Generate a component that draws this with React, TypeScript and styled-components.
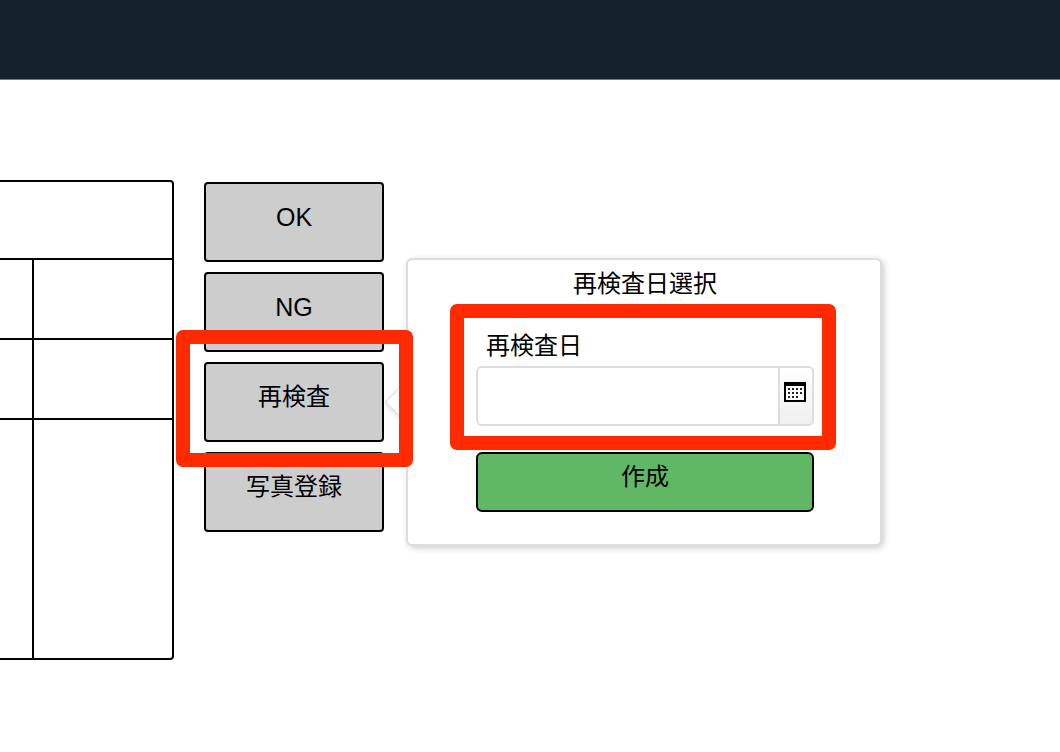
import React from "react";
import styled, { createGlobalStyle } from "styled-components";

const GlobalStyle = createGlobalStyle`
  *, *::before, *::after { box-sizing: border-box; }
  body {
    margin: 0;
    background: #fff;
    color: #000;
    font-family: "Liberation Sans", "Noto Sans CJK JP", sans-serif;
    font-size: 24px;
  }
  button, input { font: inherit; color: inherit; }
`;

const Header = styled.header`
  height: 80px;
  background: #16212e;
  border-bottom: 1px solid #737a82;
`;

const Main = styled.main`
  display: flex;
  align-items: flex-start;
  gap: 30px;
  padding: 100px 0 92px;
`;

const Sheet = styled.table`
  flex: none;
  width: 174px;
  table-layout: fixed;
  border: 2px solid #000;
  border-left: 0;
  border-radius: 0 4px 4px 0;
  border-spacing: 0;
`;

const LabelColumn = styled.col`
  width: 34px;
`;

const Row = styled.tr<{ $height: number }>`
  height: ${(p) => p.$height}px;
`;

const Cell = styled.td<{ $divided?: boolean; $last?: boolean }>`
  padding: 0;
  border: 0 solid #000;
  border-right-width: ${(p) => (p.$divided ? 2 : 0)}px;
  border-bottom-width: ${(p) => (p.$last ? 0 : 2)}px;
`;

const Actions = styled.div`
  display: flex;
  flex-direction: column;
  gap: 10px;
  width: 180px;
  padding-top: 2px;
`;

const ActionItem = styled.div<{ $raised?: boolean }>`
  position: relative;
  z-index: ${(p) => (p.$raised ? 1 : 0)};
`;

const ActionButton = styled.button<{ $latin?: boolean }>`
  display: block;
  width: 100%;
  height: 80px;
  padding: 0 0 10px;
  border: 2px solid #000;
  border-radius: 4px;
  background: #cdcdcd;
  font-size: ${(p) => (p.$latin ? 25 : 24)}px;
  line-height: 36px;
`;

const Popover = styled.section`
  position: absolute;
  top: 50%;
  left: calc(100% + 22px);
  transform: translateY(-50%);
  width: 476px;
  padding: 8px 66px 32px 68px;
  border: 2px solid #ddd;
  border-radius: 6px;
  background: #fff;
  box-shadow: 2px 2px 6px rgba(0, 0, 0, 0.2);

  &::before {
    content: "";
    position: absolute;
    top: 50%;
    left: -17px;
    width: 30px;
    height: 30px;
    margin-top: -15px;
    border: 1px solid #ddd;
    border-width: 0 0 1px 1px;
    background: #fff;
    box-shadow: 1px 2px 4px rgba(0, 0, 0, 0.1);
    transform: rotate(45deg);
    clip-path: polygon(-20% -20%, 120% 120%, -20% 120%);
  }
`;

const Title = styled.h2`
  margin: 0 0 26px;
  font-size: 24px;
  font-weight: 400;
  line-height: 32px;
  text-align: center;
`;

const Field = styled.div`
  position: relative;
  margin-bottom: 26px;
`;

const FieldLabel = styled.label`
  display: block;
  height: 40px;
  padding-left: 10px;
  line-height: 40px;
`;

const DateBox = styled.div`
  display: flex;
  height: 60px;
  border: 2px solid #ddd;
  border-radius: 6px;
  overflow: hidden;
`;

const DateInput = styled.input`
  flex: 1;
  min-width: 0;
  padding: 0 10px;
  border: 0;
  outline: 0;
  background: #fff;
`;

const PickerButton = styled.button`
  display: flex;
  align-items: center;
  justify-content: center;
  width: 34px;
  padding: 0 2px 8px 0;
  border: 0;
  border-left: 2px solid #ddd;
  background: linear-gradient(#fff, #f0f0f0);
`;

const CreateButton = styled.button`
  display: block;
  width: 100%;
  height: 60px;
  padding: 0 0 10px;
  border: 2px solid #000;
  border-radius: 6px;
  background: #60b865;
  line-height: 36px;
`;

const Highlight = styled.div<{ $inset: string }>`
  position: absolute;
  inset: ${(p) => p.$inset};
  border: 14px solid #ff2a00;
  border-radius: 7px;
  pointer-events: none;
`;

const dotRows = [
  { y: 6, xs: [4, 8, 12, 16] },
  { y: 10, xs: [4, 8, 12, 16] },
  { y: 14, xs: [4, 8, 12] },
];

function CalendarIcon() {
  return (
    <svg width="22" height="20" viewBox="0 0 22 20" shapeRendering="crispEdges" aria-hidden="true">
      <rect width="22" height="20" fill="#000" />
      <rect x="2" y="4" width="18" height="14" fill="#fff" />
      {dotRows.map((row) =>
        row.xs.map((x) => <rect key={`${x}-${row.y}`} x={x} y={row.y} width="2" height="2" fill="#222" />)
      )}
    </svg>
  );
}

function RecheckPopover() {
  return (
    <Popover aria-labelledby="recheck-title">
      <Title id="recheck-title">再検査日選択</Title>
      <Field>
        <FieldLabel htmlFor="recheck-date">再検査日</FieldLabel>
        <DateBox>
          <DateInput id="recheck-date" type="text" />
          <PickerButton type="button">
            <CalendarIcon />
          </PickerButton>
        </DateBox>
        <Highlight $inset="-22px -22px -24px -26px" />
      </Field>
      <CreateButton type="button">作成</CreateButton>
    </Popover>
  );
}

export default function App() {
  return (
    <>
      <GlobalStyle />
      <Header />
      <Main>
        <Sheet>
          <colgroup>
            <LabelColumn />
            <col />
          </colgroup>
          <tbody>
            <Row $height={78}>
              <Cell colSpan={2} />
            </Row>
            <Row $height={80}>
              <Cell $divided />
              <Cell />
            </Row>
            <Row $height={80}>
              <Cell $divided />
              <Cell />
            </Row>
            <Row $height={238}>
              <Cell $divided $last />
              <Cell $last />
            </Row>
          </tbody>
        </Sheet>
        <Actions>
          <ActionItem>
            <ActionButton type="button" $latin>OK</ActionButton>
          </ActionItem>
          <ActionItem>
            <ActionButton type="button" $latin>NG</ActionButton>
          </ActionItem>
          <ActionItem $raised>
            <ActionButton type="button">再検査</ActionButton>
            <RecheckPopover />
            <Highlight $inset="-32px -29px -25px -28px" />
          </ActionItem>
          <ActionItem>
            <ActionButton type="button">写真登録</ActionButton>
          </ActionItem>
        </Actions>
      </Main>
    </>
  );
}
